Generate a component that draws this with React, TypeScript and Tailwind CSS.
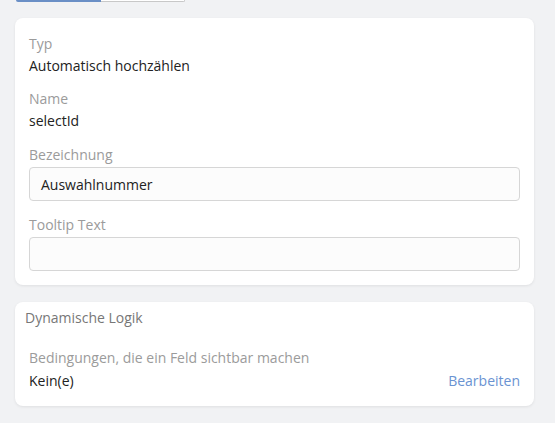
import React from "react";

const Field = ({ label, value }: { label: string; value: string }) => (
  <div className="flex flex-col">
    <span className="text-[14px] leading-[22px] text-[#9b9b9b]">{label}</span>
    <span className="text-[14px] leading-[22px] text-[#222]">{value}</span>
  </div>
);

const InputField = ({ label, value }: { label: string; value: string }) => (
  <div className="flex flex-col gap-[1px]">
    <span className="text-[14px] leading-[22px] text-[#9b9b9b]">{label}</span>
    <div className="h-[34px] rounded-[4px] border border-[#d6d6d6] bg-[#fcfcfc] px-[11px] flex items-center text-[14px] text-[#222]">
      {value}
    </div>
  </div>
);

const App = () => {
  return (
    <div
      className="w-[555px] h-[423px] bg-[#f1f2f4] px-[15px] pr-[21px] flex flex-col"
      style={{ fontFamily: '"Open Sans", "Liberation Sans", sans-serif' }}
    >
      {/* bottom edge of the tab switch */}
      <div className="flex h-[2px] ml-[1px] w-[169px]">
        <div className="w-[85px] h-full bg-[#6a8fc6] rounded-bl-[3px]" />
        <div className="flex-1 h-full bg-white border-b border-r border-[#c8c8c8] rounded-br-[3px]" />
      </div>

      <div className="mt-[16px] bg-white rounded-[8px] shadow-[0_1px_3px_rgba(0,0,0,0.08)] px-[14px] pt-[15px] pb-[14px] flex flex-col">
        <Field label="Typ" value="Automatisch hochzählen" />
        <div className="h-[11px]" />
        <Field label="Name" value="selectId" />
        <div className="h-[12px]" />
        <InputField label="Bezeichnung" value="Auswahlnummer" />
        <div className="h-[13px]" />
        <InputField label="Tooltip Text" value="" />
      </div>

      <div className="mt-[17px] bg-white rounded-[8px] shadow-[0_1px_3px_rgba(0,0,0,0.08)] pt-[6px] pb-[14px] flex flex-col">
        <div className="px-[10px] text-[14px] leading-[20px] text-[#777]">Dynamische Logik</div>
        <div className="mt-[19px] px-[14px] flex flex-col">
          <span className="text-[14px] leading-[22px] text-[#9b9b9b]">
            Bedingungen, die ein Feld sichtbar machen
          </span>
          <div className="mt-[1px] flex justify-between items-center text-[14px] leading-[22px]">
            <span className="text-[#222]">Kein(e)</span>
            <span className="text-[#6a93d2]">Bearbeiten</span>
          </div>
        </div>
      </div>
    </div>
  );
};

export default App;
